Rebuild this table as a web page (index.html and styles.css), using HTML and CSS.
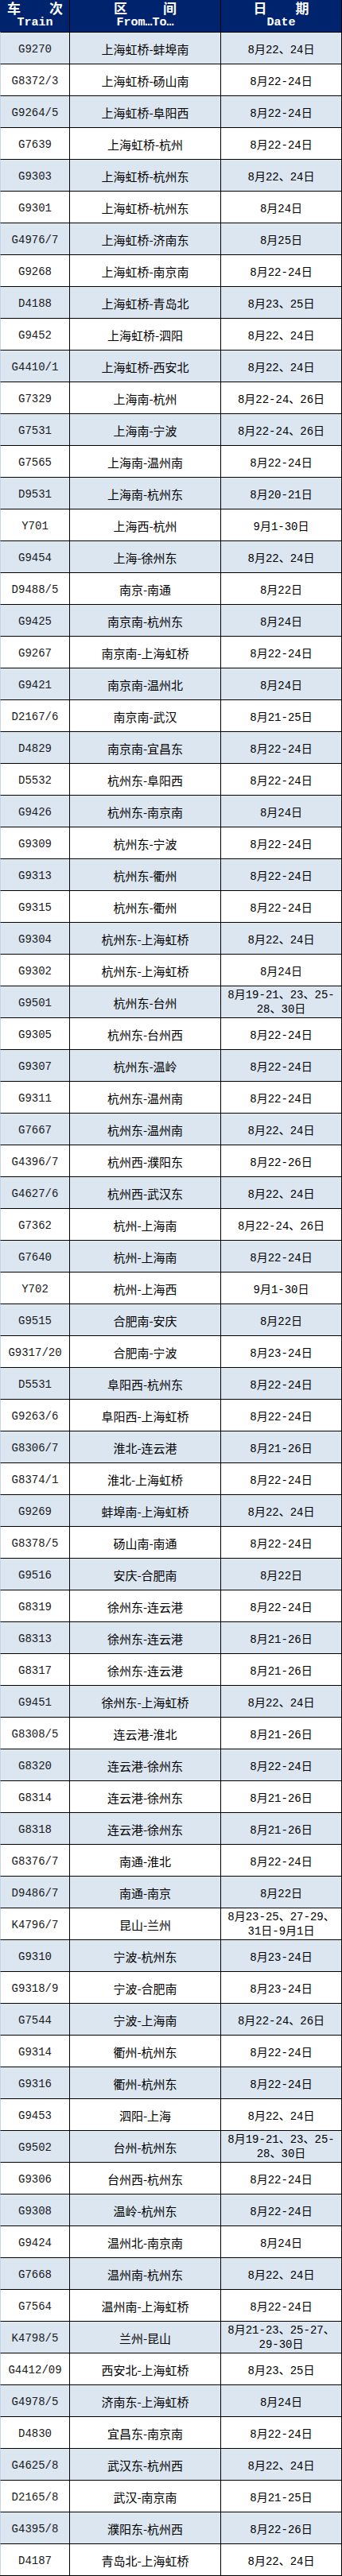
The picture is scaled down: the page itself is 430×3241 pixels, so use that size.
FILE: index.html
```html
<!DOCTYPE html>
<html lang="zh-CN">
<head>
<meta charset="utf-8">
<title>列车时刻</title>
<link rel="stylesheet" href="styles.css">
</head>
<body>
<div class="sheet">
  <div class="row head">
    <div class="cell hc"><div class="cn g1"><span>车</span><span>次</span></div><div class="en">Train</div></div>
    <div class="cell hc"><div class="cn g2"><span>区</span><span>间</span></div><div class="en">From…To…</div></div>
    <div class="cell hc"><div class="cn g3"><span>日</span><span>期</span></div><div class="en">Date</div></div>
  </div>
  <div class="rows">
    <div class="row"><div class="cell no">G9270</div><div class="cell rt">上海虹桥-蚌埠南</div><div class="cell dt">8月22、24日</div></div>
    <div class="row"><div class="cell no">G8372/3</div><div class="cell rt">上海虹桥-砀山南</div><div class="cell dt">8月22-24日</div></div>
    <div class="row"><div class="cell no">G9264/5</div><div class="cell rt">上海虹桥-阜阳西</div><div class="cell dt">8月22-24日</div></div>
    <div class="row"><div class="cell no">G7639</div><div class="cell rt">上海虹桥-杭州</div><div class="cell dt">8月22-24日</div></div>
    <div class="row"><div class="cell no">G9303</div><div class="cell rt">上海虹桥-杭州东</div><div class="cell dt">8月22、24日</div></div>
    <div class="row"><div class="cell no">G9301</div><div class="cell rt">上海虹桥-杭州东</div><div class="cell dt">8月24日</div></div>
    <div class="row"><div class="cell no">G4976/7</div><div class="cell rt">上海虹桥-济南东</div><div class="cell dt">8月25日</div></div>
    <div class="row"><div class="cell no">G9268</div><div class="cell rt">上海虹桥-南京南</div><div class="cell dt">8月22-24日</div></div>
    <div class="row"><div class="cell no">D4188</div><div class="cell rt">上海虹桥-青岛北</div><div class="cell dt">8月23、25日</div></div>
    <div class="row"><div class="cell no">G9452</div><div class="cell rt">上海虹桥-泗阳</div><div class="cell dt">8月22、24日</div></div>
    <div class="row"><div class="cell no">G4410/1</div><div class="cell rt">上海虹桥-西安北</div><div class="cell dt">8月22、24日</div></div>
    <div class="row"><div class="cell no">G7329</div><div class="cell rt">上海南-杭州</div><div class="cell dt">8月22-24、26日</div></div>
    <div class="row"><div class="cell no">G7531</div><div class="cell rt">上海南-宁波</div><div class="cell dt">8月22-24、26日</div></div>
    <div class="row"><div class="cell no">G7565</div><div class="cell rt">上海南-温州南</div><div class="cell dt">8月22-24日</div></div>
    <div class="row"><div class="cell no">D9531</div><div class="cell rt">上海南-杭州东</div><div class="cell dt">8月20-21日</div></div>
    <div class="row"><div class="cell no">Y701</div><div class="cell rt">上海西-杭州</div><div class="cell dt">9月1-30日</div></div>
    <div class="row"><div class="cell no">G9454</div><div class="cell rt">上海-徐州东</div><div class="cell dt">8月22、24日</div></div>
    <div class="row"><div class="cell no">D9488/5</div><div class="cell rt">南京-南通</div><div class="cell dt">8月22日</div></div>
    <div class="row"><div class="cell no">G9425</div><div class="cell rt">南京南-杭州东</div><div class="cell dt">8月24日</div></div>
    <div class="row"><div class="cell no">G9267</div><div class="cell rt">南京南-上海虹桥</div><div class="cell dt">8月22-24日</div></div>
    <div class="row"><div class="cell no">G9421</div><div class="cell rt">南京南-温州北</div><div class="cell dt">8月24日</div></div>
    <div class="row"><div class="cell no">D2167/6</div><div class="cell rt">南京南-武汉</div><div class="cell dt">8月21-25日</div></div>
    <div class="row"><div class="cell no">D4829</div><div class="cell rt">南京南-宜昌东</div><div class="cell dt">8月22-24日</div></div>
    <div class="row"><div class="cell no">D5532</div><div class="cell rt">杭州东-阜阳西</div><div class="cell dt">8月22-24日</div></div>
    <div class="row"><div class="cell no">G9426</div><div class="cell rt">杭州东-南京南</div><div class="cell dt">8月24日</div></div>
    <div class="row"><div class="cell no">G9309</div><div class="cell rt">杭州东-宁波</div><div class="cell dt">8月22-24日</div></div>
    <div class="row"><div class="cell no">G9313</div><div class="cell rt">杭州东-衢州</div><div class="cell dt">8月22-24日</div></div>
    <div class="row"><div class="cell no">G9315</div><div class="cell rt">杭州东-衢州</div><div class="cell dt">8月22-24日</div></div>
    <div class="row"><div class="cell no">G9304</div><div class="cell rt">杭州东-上海虹桥</div><div class="cell dt">8月22、24日</div></div>
    <div class="row"><div class="cell no">G9302</div><div class="cell rt">杭州东-上海虹桥</div><div class="cell dt">8月24日</div></div>
    <div class="row"><div class="cell no">G9501</div><div class="cell rt">杭州东-台州</div><div class="cell dt two">8月19-21、23、25-<br>28、30日</div></div>
    <div class="row"><div class="cell no">G9305</div><div class="cell rt">杭州东-台州西</div><div class="cell dt">8月22-24日</div></div>
    <div class="row"><div class="cell no">G9307</div><div class="cell rt">杭州东-温岭</div><div class="cell dt">8月22-24日</div></div>
    <div class="row"><div class="cell no">G9311</div><div class="cell rt">杭州东-温州南</div><div class="cell dt">8月22-24日</div></div>
    <div class="row"><div class="cell no">G7667</div><div class="cell rt">杭州东-温州南</div><div class="cell dt">8月22、24日</div></div>
    <div class="row"><div class="cell no">G4396/7</div><div class="cell rt">杭州西-濮阳东</div><div class="cell dt">8月22-26日</div></div>
    <div class="row"><div class="cell no">G4627/6</div><div class="cell rt">杭州西-武汉东</div><div class="cell dt">8月22、24日</div></div>
    <div class="row"><div class="cell no">G7362</div><div class="cell rt">杭州-上海南</div><div class="cell dt">8月22-24、26日</div></div>
    <div class="row"><div class="cell no">G7640</div><div class="cell rt">杭州-上海南</div><div class="cell dt">8月22-24日</div></div>
    <div class="row"><div class="cell no">Y702</div><div class="cell rt">杭州-上海西</div><div class="cell dt">9月1-30日</div></div>
    <div class="row"><div class="cell no">G9515</div><div class="cell rt">合肥南-安庆</div><div class="cell dt">8月22日</div></div>
    <div class="row"><div class="cell no">G9317/20</div><div class="cell rt">合肥南-宁波</div><div class="cell dt">8月23-24日</div></div>
    <div class="row"><div class="cell no">D5531</div><div class="cell rt">阜阳西-杭州东</div><div class="cell dt">8月22-24日</div></div>
    <div class="row"><div class="cell no">G9263/6</div><div class="cell rt">阜阳西-上海虹桥</div><div class="cell dt">8月22-24日</div></div>
    <div class="row"><div class="cell no">G8306/7</div><div class="cell rt">淮北-连云港</div><div class="cell dt">8月21-26日</div></div>
    <div class="row"><div class="cell no">G8374/1</div><div class="cell rt">淮北-上海虹桥</div><div class="cell dt">8月22-24日</div></div>
    <div class="row"><div class="cell no">G9269</div><div class="cell rt">蚌埠南-上海虹桥</div><div class="cell dt">8月22、24日</div></div>
    <div class="row"><div class="cell no">G8378/5</div><div class="cell rt">砀山南-南通</div><div class="cell dt">8月22-24日</div></div>
    <div class="row"><div class="cell no">G9516</div><div class="cell rt">安庆-合肥南</div><div class="cell dt">8月22日</div></div>
    <div class="row"><div class="cell no">G8319</div><div class="cell rt">徐州东-连云港</div><div class="cell dt">8月22-24日</div></div>
    <div class="row"><div class="cell no">G8313</div><div class="cell rt">徐州东-连云港</div><div class="cell dt">8月21-26日</div></div>
    <div class="row"><div class="cell no">G8317</div><div class="cell rt">徐州东-连云港</div><div class="cell dt">8月21-26日</div></div>
    <div class="row"><div class="cell no">G9451</div><div class="cell rt">徐州东-上海虹桥</div><div class="cell dt">8月22、24日</div></div>
    <div class="row"><div class="cell no">G8308/5</div><div class="cell rt">连云港-淮北</div><div class="cell dt">8月21-26日</div></div>
    <div class="row"><div class="cell no">G8320</div><div class="cell rt">连云港-徐州东</div><div class="cell dt">8月22-24日</div></div>
    <div class="row"><div class="cell no">G8314</div><div class="cell rt">连云港-徐州东</div><div class="cell dt">8月21-26日</div></div>
    <div class="row"><div class="cell no">G8318</div><div class="cell rt">连云港-徐州东</div><div class="cell dt">8月21-26日</div></div>
    <div class="row"><div class="cell no">G8376/7</div><div class="cell rt">南通-淮北</div><div class="cell dt">8月22-24日</div></div>
    <div class="row"><div class="cell no">D9486/7</div><div class="cell rt">南通-南京</div><div class="cell dt">8月22日</div></div>
    <div class="row"><div class="cell no">K4796/7</div><div class="cell rt">昆山-兰州</div><div class="cell dt two">8月23-25、27-29、<br>31日-9月1日</div></div>
    <div class="row"><div class="cell no">G9310</div><div class="cell rt">宁波-杭州东</div><div class="cell dt">8月23-24日</div></div>
    <div class="row"><div class="cell no">G9318/9</div><div class="cell rt">宁波-合肥南</div><div class="cell dt">8月23-24日</div></div>
    <div class="row"><div class="cell no">G7544</div><div class="cell rt">宁波-上海南</div><div class="cell dt">8月22-24、26日</div></div>
    <div class="row"><div class="cell no">G9314</div><div class="cell rt">衢州-杭州东</div><div class="cell dt">8月22-24日</div></div>
    <div class="row"><div class="cell no">G9316</div><div class="cell rt">衢州-杭州东</div><div class="cell dt">8月22-24日</div></div>
    <div class="row"><div class="cell no">G9453</div><div class="cell rt">泗阳-上海</div><div class="cell dt">8月22、24日</div></div>
    <div class="row"><div class="cell no">G9502</div><div class="cell rt">台州-杭州东</div><div class="cell dt two">8月19-21、23、25-<br>28、30日</div></div>
    <div class="row"><div class="cell no">G9306</div><div class="cell rt">台州西-杭州东</div><div class="cell dt">8月22-24日</div></div>
    <div class="row"><div class="cell no">G9308</div><div class="cell rt">温岭-杭州东</div><div class="cell dt">8月22-24日</div></div>
    <div class="row"><div class="cell no">G9424</div><div class="cell rt">温州北-南京南</div><div class="cell dt">8月24日</div></div>
    <div class="row"><div class="cell no">G7668</div><div class="cell rt">温州南-杭州东</div><div class="cell dt">8月22、24日</div></div>
    <div class="row"><div class="cell no">G7564</div><div class="cell rt">温州南-上海虹桥</div><div class="cell dt">8月22-24日</div></div>
    <div class="row"><div class="cell no">K4798/5</div><div class="cell rt">兰州-昆山</div><div class="cell dt two">8月21-23、25-27、<br>29-30日</div></div>
    <div class="row"><div class="cell no">G4412/09</div><div class="cell rt">西安北-上海虹桥</div><div class="cell dt">8月23、25日</div></div>
    <div class="row"><div class="cell no">G4978/5</div><div class="cell rt">济南东-上海虹桥</div><div class="cell dt">8月24日</div></div>
    <div class="row"><div class="cell no">D4830</div><div class="cell rt">宜昌东-南京南</div><div class="cell dt">8月22-24日</div></div>
    <div class="row"><div class="cell no">G4625/8</div><div class="cell rt">武汉东-杭州西</div><div class="cell dt">8月22、24日</div></div>
    <div class="row"><div class="cell no">D2165/8</div><div class="cell rt">武汉-南京南</div><div class="cell dt">8月21-25日</div></div>
    <div class="row"><div class="cell no">G4395/8</div><div class="cell rt">濮阳东-杭州西</div><div class="cell dt">8月22-26日</div></div>
    <div class="row"><div class="cell no">D4187</div><div class="cell rt">青岛北-上海虹桥</div><div class="cell dt">8月22、24日</div></div>
  </div>
</div>
</body>
</html>
```

FILE: styles.css
```css
* {
  box-sizing: border-box;
}

html, body {
  margin: 0;
  padding: 0;
  background: #ffffff;
}

.sheet {
  width: 430px;
  border-bottom: 1px solid #000000;
}

.row {
  display: grid;
  grid-template-columns: 87px 190px 152px;
  border-left: 1px solid #c8d4e6;
}

.cell {
  border-right: 1px solid #000000;
  display: flex;
  align-items: center;
  justify-content: center;
  text-align: center;
  color: #000000;
  white-space: nowrap;
}

.head {
  height: 40px;
  background: #00236e;
  border-left-color: #00236e;
}

.hc {
  flex-direction: column;
  justify-content: center;
  color: #ffffff;
  font-weight: bold;
}

.hc .cn {
  display: flex;
  justify-content: center;
  height: 20px;
  line-height: 20px;
  font-family: "Noto Sans CJK SC", sans-serif;
  font-size: 17px;
  font-weight: bold;
}

.g1 { gap: 36px; }
.g2 { gap: 45px; }
.g3 { gap: 36px; }

.hc .en {
  height: 20px;
  line-height: 18px;
  font-family: "Liberation Mono", "Noto Sans CJK SC", monospace;
  font-size: 15px;
  font-weight: bold;
}

.rows .row {
  height: 40px;
  border-top: 1px solid #000000;
  background: #ffffff;
}

.rows .row:nth-child(odd) {
  background: #dce6f1;
}

.no {
  font-family: "Liberation Mono", monospace;
  font-size: 14px;
  color: #1a1a1a;
  padding-top: 2px;
}

.rt {
  font-family: "Noto Sans CJK SC", sans-serif;
  font-size: 15px;
  padding-top: 1px;
}

.dt {
  font-family: "Liberation Mono", "Noto Sans CJK SC", monospace;
  font-size: 14px;
  padding-top: 1px;
}

.dt.two {
  line-height: 18px;
  white-space: normal;
  padding-top: 0;
}
```
